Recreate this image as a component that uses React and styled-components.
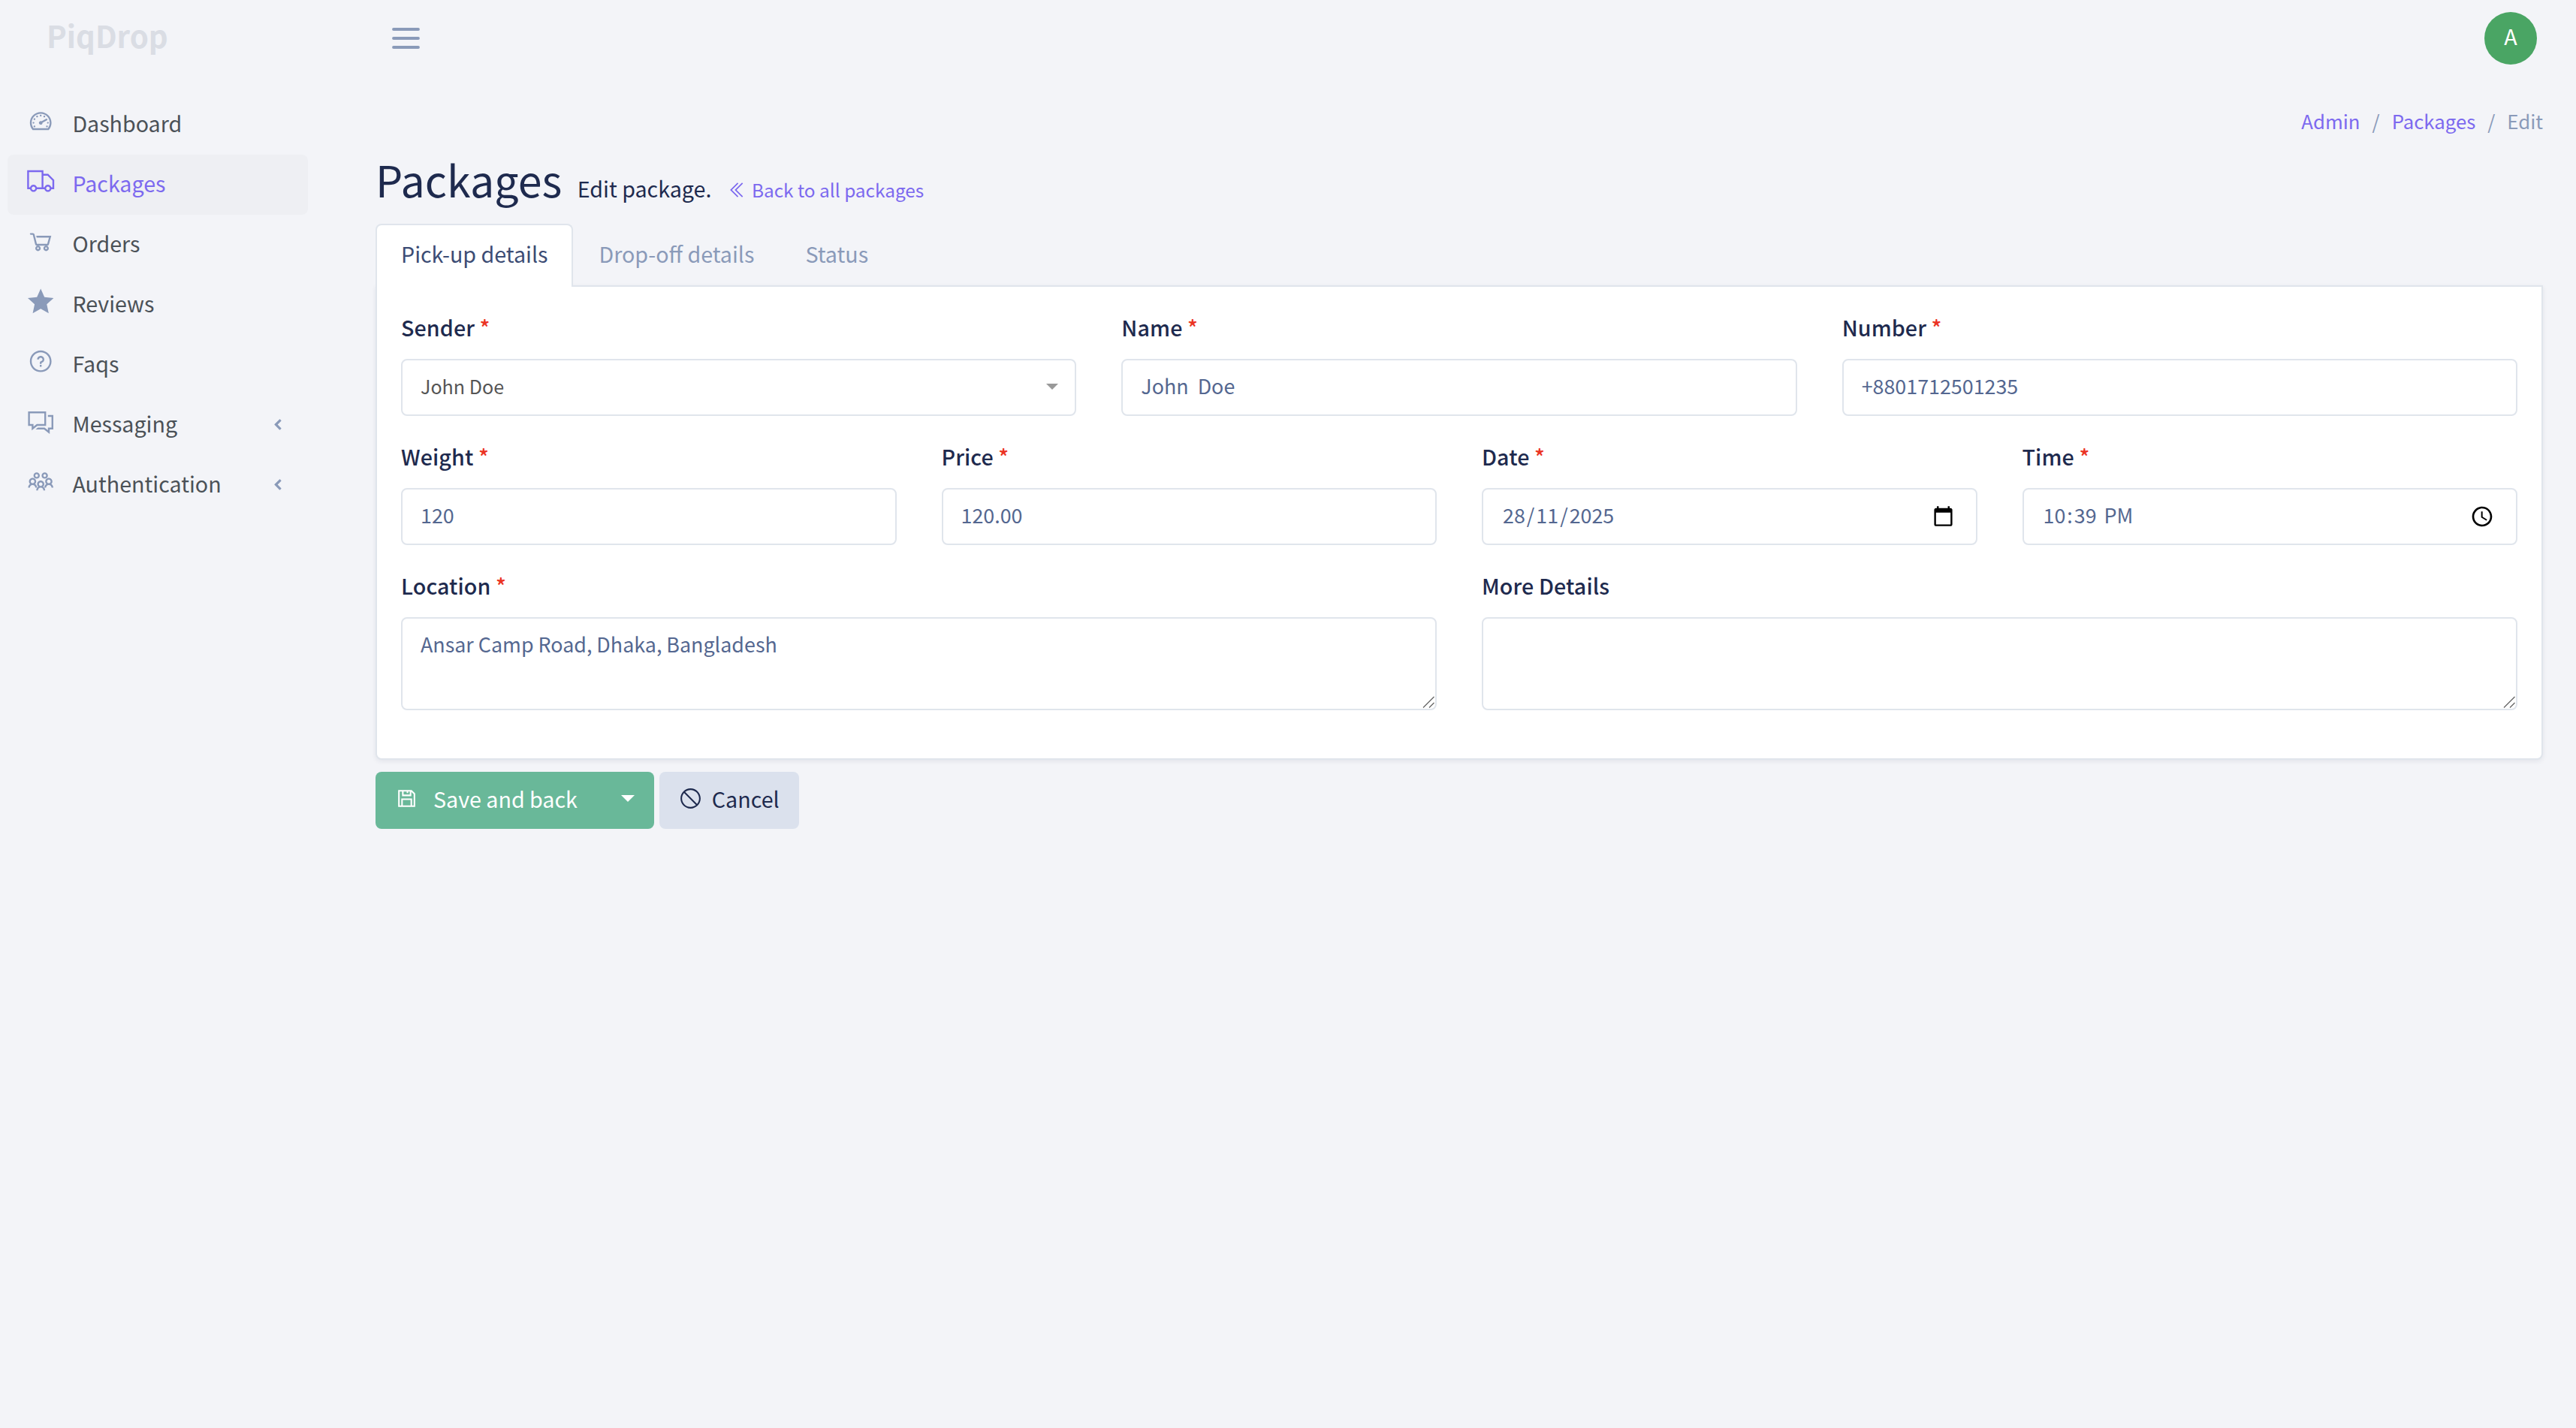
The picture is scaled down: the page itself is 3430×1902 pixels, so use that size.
import styled, { createGlobalStyle } from "styled-components";
import {
  LiaAngleDoubleLeftSolid,
  LiaBanSolid,
  LiaComments,
  LiaQuestionCircle,
  LiaSaveSolid,
  LiaShoppingCartSolid,
  LiaStarSolid,
  LiaTachometerAltSolid,
  LiaTruckSolid,
  LiaUsersSolid,
} from "react-icons/lia";

const menu = [
  { label: "Dashboard", icon: LiaTachometerAltSolid },
  { label: "Packages", icon: LiaTruckSolid, active: true },
  { label: "Orders", icon: LiaShoppingCartSolid },
  { label: "Reviews", icon: LiaStarSolid },
  { label: "Faqs", icon: LiaQuestionCircle },
  { label: "Messaging", icon: LiaComments, dropdown: true },
  { label: "Authentication", icon: LiaUsersSolid, dropdown: true },
];

const tabs = ["Pick-up details", "Drop-off details", "Status"];

const Field = ({ label, required, children }) => (
  <FieldGroup>
    <Label>
      {label}
      {required && <Required> *</Required>}
    </Label>
    {children}
  </FieldGroup>
);

const TextBox = ({ value }) => (
  <TextAreaWrap>
    <TextArea defaultValue={value} />
    <Grip viewBox="0 0 16 16">
      <path d="M1 15.5 15.5 1M9 15.5l6.5-6.5" />
    </Grip>
  </TextAreaWrap>
);

const App = () => {
  return (
    <Page>
      <GlobalStyle />
      <Sidebar>
        <Brand>PiqDrop</Brand>
        <Nav>
          {menu.map(({ label, icon: Icon, active, dropdown }) => (
            <NavItem key={label} href="#" $active={active}>
              <Icon size={38.4} />
              <span>{label}</span>
              {dropdown && (
                <Chevron viewBox="0 0 11 14">
                  <path d="M9.148 2.352l-4.148 4.148 4.148 4.148q0.148 0.148 0.148 0.352t-0.148 0.352l-1.297 1.297q-0.148 0.148-0.352 0.148t-0.352-0.148l-5.797-5.797q-0.148-0.148-0.148-0.352t0.148-0.352l5.797-5.797q0.148-0.148 0.352-0.148t0.352 0.148l1.297 1.297q0.148 0.148 0.148 0.352t-0.148 0.352z" />
                </Chevron>
              )}
            </NavItem>
          ))}
        </Nav>
      </Sidebar>

      <Main>
        <Header>
          <Toggler viewBox="0 0 37 28">
            <path d="M2 2h33M2 14h33M2 26h33" />
          </Toggler>
          <Avatar>A</Avatar>
        </Header>

        <Breadcrumb>
          <a href="#">Admin</a>
          <span>/</span>
          <a href="#">Packages</a>
          <span>/</span>
          <span>Edit</span>
        </Breadcrumb>

        <Heading>
          <Title>Packages</Title>
          <Subtitle>Edit package.</Subtitle>
          <BackLink href="#">
            <LiaAngleDoubleLeftSolid size={28} />
            Back to all packages
          </BackLink>
        </Heading>

        <Tabs>
          {tabs.map((tab, i) => (
            <Tab key={tab} $active={i === 0}>
              {tab}
            </Tab>
          ))}
        </Tabs>

        <Card>
          <Row $cols={3}>
            <Field label="Sender" required>
              <Select>
                John Doe
                <Caret $color="#999" $size={8} />
              </Select>
            </Field>
            <Field label="Name" required>
              <Input defaultValue="John  Doe" />
            </Field>
            <Field label="Number" required>
              <Input defaultValue="+8801712501235" />
            </Field>
          </Row>
          <Row $cols={4}>
            <Field label="Weight" required>
              <Input defaultValue="120" />
            </Field>
            <Field label="Price" required>
              <Input defaultValue="120.00" />
            </Field>
            <Field label="Date" required>
              <Picker>
                <Part>28</Part>/<Part>11</Part>/<Part>2025</Part>
                <PickerIcon viewBox="0 0 24 24" $size={29}>
                  <path d="M20 3h-1V1h-2v2H7V1H5v2H4c-1.1 0-2 .9-2 2v16c0 1.1.9 2 2 2h16c1.1 0 2-.9 2-2V5c0-1.1-.9-2-2-2zm0 18H4V8h16v13z" />
                </PickerIcon>
              </Picker>
            </Field>
            <Field label="Time" required>
              <Picker>
                <Part>10</Part>:<Part>39</Part>
                <Part> PM</Part>
                <PickerIcon viewBox="0 0 24 24" $size={32}>
                  <path d="M11.99 2C6.47 2 2 6.48 2 12s4.47 10 9.99 10C17.52 22 22 17.52 22 12S17.52 2 11.99 2zM12 20c-4.42 0-8-3.58-8-8s3.58-8 8-8 8 3.58 8 8-3.58 8-8 8zm.5-13H11v6l5.25 3.15.75-1.23-4.5-2.67z" />
                </PickerIcon>
              </Picker>
            </Field>
          </Row>
          <Row $cols={2}>
            <Field label="Location" required>
              <TextBox value="Ansar Camp Road, Dhaka, Bangladesh" />
            </Field>
            <Field label="More Details">
              <TextBox value="" />
            </Field>
          </Row>
        </Card>

        <Actions>
          <SaveGroup>
            <SaveButton>
              <LiaSaveSolid size={33} />
              Save and back
            </SaveButton>
            <SaveToggle>
              <Caret $color="#fff" $size={9} />
            </SaveToggle>
          </SaveGroup>
          <CancelButton>
            <LiaBanSolid size={33} />
            Cancel
          </CancelButton>
        </Actions>
      </Main>
    </Page>
  );
};

export default App;

const GlobalStyle = createGlobalStyle`
  * {
    box-sizing: border-box;
  }
  body {
    margin: 0;
    background: #f3f4f8;
  }
  body, input, textarea, button {
    font-family: "Noto Sans CJK SC", "Open Sans", sans-serif;
    font-size: 28.65px;
  }
  a {
    color: #7c69ef;
    text-decoration: none;
  }
`;

const Page = styled.div`
  display: flex;
  min-height: 100vh;
  color: #1e2a4e;
`;

const Sidebar = styled.aside`
  width: 420px;
  flex-shrink: 0;
`;

const Brand = styled.div`
  height: 102px;
  padding: 0 0 7px 62px;
  display: flex;
  align-items: center;
  font-size: 40.2px;
  font-weight: 700;
  line-height: 1;
  color: #dadde4;
`;

const Nav = styled.nav`
  padding: 24px 10px 0;
`;

const NavItem = styled.a`
  display: flex;
  align-items: center;
  height: 80px;
  padding: 0 34px 4px 25px;
  border-radius: 8px;
  line-height: 48px;
  color: ${(p) => (p.$active ? "#7c69ef" : "#4b5157")};
  background: ${(p) => (p.$active ? "#eeeff3" : "transparent")};

  > svg:first-child {
    margin: 0 23px 6px 0;
    color: ${(p) => (p.$active ? "#7c69ef" : "#8a9ab9")};
  }
`;

const Chevron = styled.svg`
  width: 12.5px;
  height: 16px;
  margin: 3px 0 0 auto;
  fill: #8a9ab9;
`;

const Main = styled.main`
  flex: 1;
  padding: 0 44px 0 80px;
`;

const Header = styled.header`
  height: 102px;
  padding: 0 8px 0 21.5px;
  display: flex;
  align-items: center;
  justify-content: space-between;
`;

const Toggler = styled.svg`
  width: 37px;
  height: 28px;
  stroke: #8a9ab9;
  stroke-width: 3.8;
  stroke-linecap: round;
`;

const Avatar = styled.div`
  width: 70px;
  height: 70px;
  padding-bottom: 5px;
  display: flex;
  align-items: center;
  justify-content: center;
  border-radius: 50%;
  font-size: 28.65px;
  line-height: 1;
  color: #fff;
  background: #4aa564;
`;

const Breadcrumb = styled.div`
  display: flex;
  justify-content: flex-end;
  gap: 16px;
  margin-top: 39px;
  font-size: 25.75px;
  line-height: 40px;
  color: #8a9ab9;
`;

const Heading = styled.div`
  display: flex;
  align-items: baseline;
  margin: 20px 0 21px;
`;

const Title = styled.h2`
  margin: 0 20.5px 0 0;
  font-size: 57.3px;
  font-weight: 400;
  line-height: 76px;
`;

const Subtitle = styled.span`
  margin-right: 20.5px;
  line-height: 40px;
`;

const BackLink = styled.a`
  font-size: 24.4px;
  line-height: 40px;

  svg {
    margin-right: 5px;
    vertical-align: -4px;
  }
`;

const Tabs = styled.div`
  display: flex;
  position: relative;
  z-index: 1;
  margin-bottom: -2px;
`;

const Tab = styled.div`
  height: 84px;
  padding: 14px 32px 0;
  border: 2px solid ${(p) => (p.$active ? "#e0e5ec" : "transparent")};
  border-bottom: 0;
  border-radius: 8px 8px 0 0;
  line-height: 48px;
  color: ${(p) => (p.$active ? "#3c4c74" : "#8a9ab9")};
  background: ${(p) => (p.$active ? "#fff" : "transparent")};
`;

const Card = styled.section`
  padding: 32px;
  border: 2px solid #e0e5ec;
  border-radius: 0 0 8px 8px;
  background: #fff;
  box-shadow: 0 2px 6px rgba(27, 42, 78, 0.08);
`;

const Row = styled.div`
  display: grid;
  grid-template-columns: repeat(${(p) => p.$cols}, 1fr);
  column-gap: 60px;
`;

const FieldGroup = styled.div`
  margin-bottom: 32px;
`;

const Label = styled.label`
  display: block;
  padding-top: 1px;
  margin-bottom: 21px;
  font-weight: 500;
  line-height: 42px;
  letter-spacing: 0.1px;
`;

const Required = styled.span`
  color: #eb3323;
`;

const Input = styled.input`
  display: block;
  width: 100%;
  height: 76px;
  padding: 0 24px 5px;
  border: 2px solid #e0e5ec;
  border-radius: 8px;
  outline: none;
  font-size: 26.85px;
  color: #546790;
  background: #fff;
`;

const Select = styled.div`
  display: flex;
  align-items: center;
  justify-content: space-between;
  height: 76px;
  padding: 0 22px 5px 24px;
  border: 2px solid #e0e5ec;
  border-radius: 8px;
  font-size: 25.07px;
  line-height: 40px;
  color: #555;
`;

const Caret = styled.span`
  width: 0;
  height: 0;
  margin-top: 2px;
  border: ${(p) => p.$size}px solid transparent;
  border-top-color: ${(p) => p.$color};
  border-bottom: 0;
`;

const Picker = styled.div`
  display: flex;
  align-items: center;
  height: 76px;
  padding: 0 29px 5px 24px;
  border: 2px solid #e0e5ec;
  border-radius: 8px;
  font-size: 26.85px;
  line-height: 40px;
  white-space: pre;
  color: #546790;
`;

const Part = styled.span`
  padding: 0 2px;
`;

const PickerIcon = styled.svg`
  width: ${(p) => p.$size}px;
  height: ${(p) => p.$size}px;
  margin: 4px 0 0 auto;
  fill: #000;
`;

const TextAreaWrap = styled.div`
  position: relative;
  height: 124px;
`;

const TextArea = styled.textarea`
  display: block;
  width: 100%;
  height: 100%;
  padding: 11px 24px;
  border: 2px solid #e0e5ec;
  border-radius: 8px;
  outline: none;
  resize: none;
  font-size: 26.85px;
  line-height: 45px;
  color: #546790;
  background: #fff;
`;

const Grip = styled.svg`
  position: absolute;
  right: 3px;
  bottom: 3px;
  width: 16px;
  height: 16px;
  stroke: #666;
  stroke-width: 1.3;
`;

const Actions = styled.div`
  display: flex;
  gap: 7px;
  margin-top: 16px;
`;

const Button = styled.button`
  display: flex;
  align-items: center;
  height: 76px;
  border: 0;
  border-radius: 8px;
  line-height: 48px;
`;

const SaveGroup = styled.div`
  display: flex;
`;

const SaveButton = styled(Button)`
  padding: 0 30px 5px 25px;
  border-radius: 8px 0 0 8px;
  color: #fff;
  background: #69b899;

  svg {
    margin-right: 19px;
  }
`;

const SaveToggle = styled(Button)`
  width: 72px;
  padding: 0 0 7px 28px;
  border-radius: 0 8px 8px 0;
  background: #69b899;
`;

const CancelButton = styled(Button)`
  padding: 0 26px 5px 25px;
  color: #1e2a4e;
  background: #dbe1ed;

  svg {
    margin-right: 12px;
  }
`;
